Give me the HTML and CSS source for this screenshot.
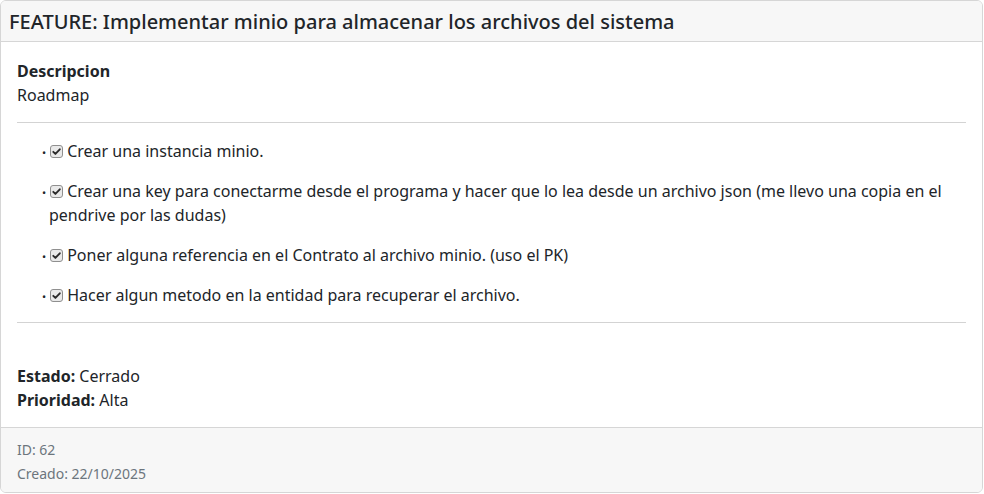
FILE: index.html
```html
<!DOCTYPE html>
<html lang="es">
<head>
<meta charset="utf-8">
<title>Feature</title>
<link rel="stylesheet" href="styles.css">
</head>
<body>
<div class="card">
  <div class="card-header">
    <h5 class="card-title">FEATURE: Implementar minio para almacenar los archivos del sistema</h5>
  </div>
  <div class="card-body">
    <div class="label">Descripcion</div>
    <div>Roadmap</div>
    <hr>
    <ul class="tasks">
      <li><p><span class="check" role="checkbox" aria-checked="true"><svg viewBox="0 0 13 13" width="13" height="13"><rect x="0.5" y="0.5" width="12" height="12" rx="2.5" fill="#e9e9e9" stroke="#8f8f8f"/><path d="M3.3 6.8 L5.4 8.9 L9.8 4.3" fill="none" stroke="#2b2b2b" stroke-width="1.9" stroke-linecap="round" stroke-linejoin="round"/></svg></span> Crear una instancia minio.</p></li>
      <li><p><span class="check" role="checkbox" aria-checked="true"><svg viewBox="0 0 13 13" width="13" height="13"><rect x="0.5" y="0.5" width="12" height="12" rx="2.5" fill="#e9e9e9" stroke="#8f8f8f"/><path d="M3.3 6.8 L5.4 8.9 L9.8 4.3" fill="none" stroke="#2b2b2b" stroke-width="1.9" stroke-linecap="round" stroke-linejoin="round"/></svg></span> Crear una key para conectarme desde el programa y hacer que lo lea desde un archivo json (me llevo una copia en el pendrive por las dudas)</p></li>
      <li><p><span class="check" role="checkbox" aria-checked="true"><svg viewBox="0 0 13 13" width="13" height="13"><rect x="0.5" y="0.5" width="12" height="12" rx="2.5" fill="#e9e9e9" stroke="#8f8f8f"/><path d="M3.3 6.8 L5.4 8.9 L9.8 4.3" fill="none" stroke="#2b2b2b" stroke-width="1.9" stroke-linecap="round" stroke-linejoin="round"/></svg></span> Poner alguna referencia en el Contrato al archivo minio. (uso el PK)</p></li>
      <li><p><span class="check" role="checkbox" aria-checked="true"><svg viewBox="0 0 13 13" width="13" height="13"><rect x="0.5" y="0.5" width="12" height="12" rx="2.5" fill="#e9e9e9" stroke="#8f8f8f"/><path d="M3.3 6.8 L5.4 8.9 L9.8 4.3" fill="none" stroke="#2b2b2b" stroke-width="1.9" stroke-linecap="round" stroke-linejoin="round"/></svg></span> Hacer algun metodo en la entidad para recuperar el archivo.</p></li>
    </ul>
    <hr>
    <div class="meta">
      <div><strong>Estado:</strong> Cerrado</div>
      <div><strong>Prioridad:</strong> Alta</div>
    </div>
  </div>
  <div class="card-footer">
    <div class="muted">ID: 62</div>
    <div class="muted">Creado: 22/10/2025</div>
  </div>
</div>
</body>
</html>
```

FILE: styles.css
```css
* { box-sizing: border-box; }
body {
  margin: 0;
  font-family: "Noto Sans", "Open Sans", sans-serif;
  font-size: 16px;
  line-height: 1.5;
  color: #212529;
  background: #fff;
}
.card {
  width: 983px;
  border: 1px solid #d6d6d6;
  border-radius: 6px;
  overflow: hidden;
}
.card-header {
  background: #f7f7f7;
  border-bottom: 1px solid #d6d6d6;
  padding: 8px 8px 6px 8px;
  height: 41px;
}
.card-title {
  margin: 0;
  font-size: 20px;
  font-weight: 500;
  line-height: 26px;
}
.card-body {
  padding: 17px 16px 15px 16px;
}
.label { font-weight: 700; }
hr {
  margin: 15px 0 16px;
  border: 0;
  border-top: 1px solid #d3d3d3;
  height: 0;
}
.tasks {
  margin: 0;
  padding: 0 0 0 32px;
}
.tasks li::marker {
  content: "\2022  ";
  font-size: 11px;
}
.tasks p { margin: 0 0 16px; }
.tasks li:last-child p { margin-bottom: 2px; }
.check {
  display: inline-block;
  width: 13px;
  height: 13px;
  margin-left: 1px;
  vertical-align: -1px;
  line-height: 0;
}
.check svg { display: block; }
.meta { padding-top: 25px; }
.meta strong { font-weight: 700; }
.card-footer {
  background: #f7f7f7;
  border-top: 1px solid #d6d6d6;
  padding: 10px 16px 6px;
}
.muted {
  font-size: 14px;
  line-height: 24px;
  color: #6c757d;
}
```
